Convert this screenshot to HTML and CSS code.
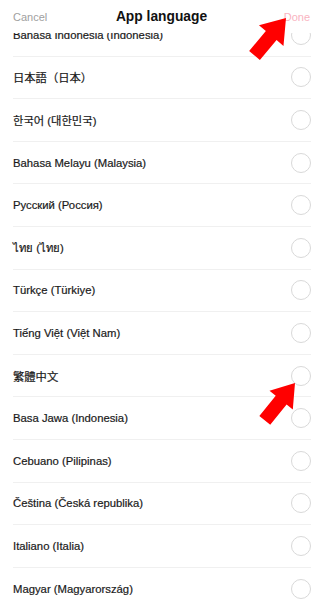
FILE: index.html
```html
<!DOCTYPE html>
<html lang="en">
<head>
<meta charset="utf-8">
<title>App language</title>
<link rel="stylesheet" href="styles.css">
</head>
<body>
<div class="page">
  <header class="topbar">
    <span class="cancel">Cancel</span>
    <span class="title">App language</span>
    <span class="done">Done</span>
  </header>
  <ul class="list">
    <li class="row"><span class="label">Bahasa Indonesia (Indonesia)</span><span class="radio"></span></li>
    <li class="row"><span class="label" lang="ja">日本語（日本）</span><span class="radio"></span></li>
    <li class="row"><span class="label" lang="ko">한국어 (대한민국)</span><span class="radio"></span></li>
    <li class="row"><span class="label">Bahasa Melayu (Malaysia)</span><span class="radio"></span></li>
    <li class="row"><span class="label">Русский (Россия)</span><span class="radio"></span></li>
    <li class="row"><span class="label" lang="th">ไทย (ไทย)</span><span class="radio"></span></li>
    <li class="row"><span class="label">Türkçe (Türkiye)</span><span class="radio"></span></li>
    <li class="row"><span class="label">Tiếng Việt (Việt Nam)</span><span class="radio"></span></li>
    <li class="row"><span class="label" lang="zh-TW">繁體中文</span><span class="radio"></span></li>
    <li class="row"><span class="label">Basa Jawa (Indonesia)</span><span class="radio"></span></li>
    <li class="row"><span class="label">Cebuano (Pilipinas)</span><span class="radio"></span></li>
    <li class="row"><span class="label">Čeština (Česká republika)</span><span class="radio"></span></li>
    <li class="row"><span class="label">Italiano (Italia)</span><span class="radio"></span></li>
    <li class="row"><span class="label">Magyar (Magyarország)</span><span class="radio"></span></li>
  </ul>
  <svg class="arrows" width="320" height="605" viewBox="0 0 320 605" aria-hidden="true">
    <polygon transform="translate(286 18) rotate(-50)" points="0,0 -23,-16 -23,-7 -49,-7 -49,7 -23,7 -23,16" fill="#ff0000"/>
    <polygon transform="translate(295 383) rotate(-51)" points="0,0 -22,-15 -22,-7 -48,-7 -48,7 -22,7 -22,15" fill="#ff0000"/>
  </svg>
</div>
</body>
</html>
```
FILE: styles.css
```css
* { box-sizing: border-box; }
html, body {
  margin: 0;
  padding: 0;
  background: #fff;
}
body {
  font-family: "Liberation Sans", "Noto Sans CJK SC", "Noto Sans", sans-serif;
  color: #1f1f1f;
}
.page {
  position: relative;
  width: 320px;
  height: 605px;
  overflow: hidden;
}
.topbar {
  position: relative;
  z-index: 2;
  height: 33px;
  background: #fff;
  display: grid;
  grid-template-columns: 1fr auto 1fr;
  align-items: center;
  padding: 0 10px 0 13px;
}
.cancel {
  font-size: 11px;
  color: #a0a0a0;
}
.title {
  font-size: 13.8px;
  font-weight: 700;
  color: #111;
}
.done {
  justify-self: end;
  font-size: 11px;
  color: #f9b4bf;
}
.list {
  list-style: none;
  margin: -19px 0 0 0;
  padding: 0;
}
.row {
  height: 42.6px;
  margin: 0 9px 0 13px;
  border-bottom: 1px solid #f0f0f0;
  display: flex;
  align-items: center;
  justify-content: space-between;
}
.label {
  font-size: 11.3px;
  color: #1a1a1a;
  -webkit-text-stroke: 0.2px #1a1a1a;
}
.label:lang(ja) { font-family: "Liberation Sans", "Noto Sans CJK JP", sans-serif; }
.label:lang(ko) { font-family: "Liberation Sans", "Noto Sans CJK KR", sans-serif; }
.label:lang(zh-TW) { font-family: "Liberation Sans", "Noto Sans CJK TC", sans-serif; }
.radio {
  width: 20px;
  height: 20px;
  border: 1.4px solid #d9d9d9;
  border-radius: 50%;
  flex: none;
}
.arrows {
  position: absolute;
  left: 0;
  top: 0;
  z-index: 3;
  pointer-events: none;
}
```
